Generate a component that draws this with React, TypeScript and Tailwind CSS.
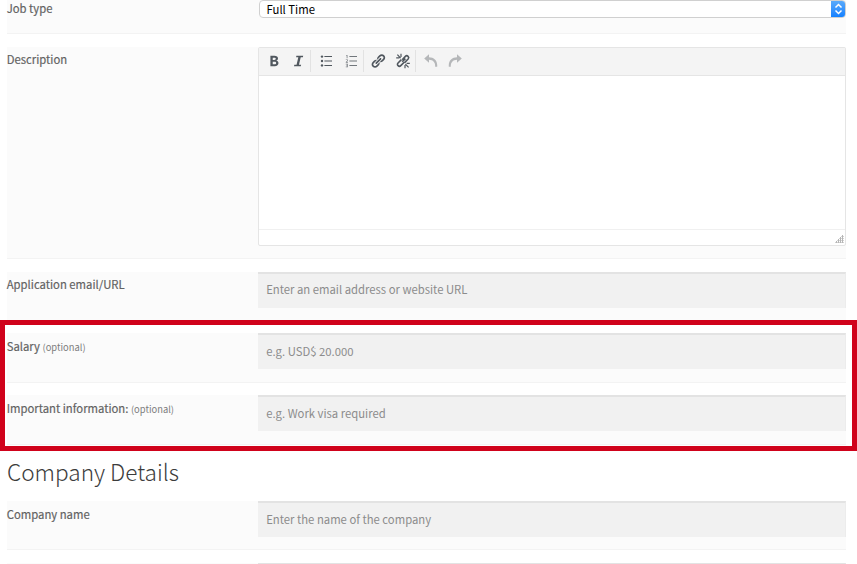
import type { ReactNode } from 'react';

type RowProps = { label: string; optional?: boolean; className: string; labelClass?: string; children: ReactNode };

function Row({ label, optional, className, labelClass = 'pt-[4px]', children }: RowProps) {
  return (
    <div className={`flex w-[839px] bg-[#fbfbfb] ${className}`}>
      <div className={`w-[251px] shrink-0 text-[11.3px] leading-[19px] text-[#5f5f5f] [-webkit-text-stroke:0.2px_#6d6d6d] ${labelClass}`}>
        <span className="-ml-[0.3px]">{label}</span>
        {optional && <small className="ml-[2.500px] text-[9.4px] text-[#7d7d7d] [-webkit-text-stroke:0]">(optional)</small>}
      </div>
      {children}
    </div>
  );
}

function Field({ placeholder, className = 'pb-[3px]' }: { placeholder: string; className?: string }) {
  return (
    <input
      placeholder={placeholder}
      className={`h-[36px] w-[588px] border-t-2 border-r border-t-[#e3e3e3] border-r-[#ececec] bg-[#f1f1f1] px-[8.2px] text-[11.3px] outline-none placeholder:text-[#8c8c8c] ${className}`}
    />
  );
}

function Icon({ children, className = 'text-[#50575e]' }: { children: ReactNode; className?: string }) {
  return (
    <svg viewBox="0 0 20 20" className={`size-4 shrink-0 ${className}`} fill="currentColor">
      {children}
    </svg>
  );
}

const Separator = () => <div className="h-[22px] w-px shrink-0 bg-[#e2e2e2]" />;

function Editor() {
  return (
    <div className="flex h-[199px] w-[588px] flex-col rounded-[2px] border border-[#e5e5e5] bg-white">
      <div className="flex h-[28px] shrink-0 items-center border-b border-[#e5e5e5] bg-[#f4f4f4] pb-px">
        <div className="flex w-[51px] items-center gap-[8px] pl-[7px]">
          <Icon>
            <path d="M5.500 3.500h4.900c2.900 0 4.600 1 4.600 3.300 0 1.300-.8 2.300-1.900 2.700v.1c1.500.3 2.500 1.300 2.500 3 0 2.500-1.800 3.900-4.700 3.900H5.500v-13zm2.900 5.100h2c1.300 0 1.800-.6 1.800-1.500S11.600 5.800 10.400 5.800h-2v2.800zm0 5.600h2.300c1.400 0 2-.6 2-1.600 0-1.200-.7-1.600-2-1.600H8.400v3.200z" />
          </Icon>
          <Icon>
            <path d="M8 3.500h8.500l-.4 1.700h-2.700l-2.200 9.600h2.700l-.4 1.700H5l.4-1.700h2.800l2.200-9.600H7.600z" />
          </Icon>
        </div>
        <Separator />
        <div className="flex w-[52px] items-center gap-[9px] pl-[7px]">
          <Icon>
            <circle cx="5" cy="4.500" r="1.500" />
            <circle cx="5" cy="10" r="1.500" />
            <circle cx="5" cy="15.500" r="1.500" />
            <path d="M8 3.900h9.500v1.200H8zM8 9.400h9.500v1.200H8zM8 14.900h9.500v1.200H8z" />
          </Icon>
          <Icon>
            <path d="M4 2.500h1.600v4.200h-1V3.500H4zM3.500 8h2.600v2l-1.400 1.300h1.400v.9H3.500v-1l1.700-1.500v-.8H3.500zM3.500 13.500h2.600v4.200H3.500v-.8h1.700v-.9H4v-.8h1.200v-.8H3.500z" opacity=".75" />
            <path d="M8 3.900h9.500v1.200H8zM8 9.400h9.500v1.200H8zM8 14.900h9.500v1.200H8z" opacity=".8" />
          </Icon>
        </div>
        <Separator />
        <div className="flex w-[51px] items-center gap-[9px] pl-[6px]">
          <Icon>
            <path d="M17.740 2.760c1.680 1.690 1.680 4.410 0 6.100l-1.530 1.520c-1.120 1.120-2.700 1.470-4.140 1.090l2.620-2.610.76-.77.76-.76c.84-.84.84-2.200 0-3.040-.84-.85-2.200-.85-3.040 0l-.77.76-3.380 3.380c-.37-1.440-.02-3.020 1.100-4.140l1.520-1.530c1.690-1.680 4.420-1.680 6.100 0zM8.590 13.430l5.340-5.340c.42-.42.42-1.100 0-1.520-.44-.43-1.130-.39-1.530 0l-5.330 5.340c-.42.42-.42 1.100 0 1.520.44.43 1.130.39 1.520 0zm-.76 2.290l4.140-4.150c.38 1.440.03 3.020-1.090 4.140l-1.520 1.530c-1.690 1.680-4.410 1.680-6.100 0-1.680-1.680-1.680-4.420 0-6.100l1.530-1.520c1.120-1.120 2.700-1.470 4.140-1.100l-4.140 4.150c-.85.84-.85 2.200 0 3.050.84.840 2.200.840 3.040 0z" />
          </Icon>
          <Icon>
            <g fill="none" stroke="currentColor" strokeWidth="2">
              <path d="M9 8.500l4-4.300c2.200-2.200 5.500 1 3.400 3.300L12 12M11.500 11.500l-4.300 4.300c-2.200 2.200-5.600-1-3.400-3.300L8 8.300M9 11l4-4" />
              <path d="M3 2l4 4.500M1.500 6h4M7.500 1v4M17 18l-4-4M18.500 13h-4M12.500 19v-4" strokeWidth="1.500" />
            </g>
          </Icon>
        </div>
        <Separator />
        <div className="flex items-center gap-[8px] pl-[7px]">
          <Icon className="text-[#b5b7b9]">
            <path d="M7.500 1.500v3.700c6 .2 10.300 3.700 10.300 10.300 0 .6 0 1.200-.1 1.700h-2.500c.5-5.300-2.700-8.600-7.700-8.700v3.800L1.500 7z" />
          </Icon>
          <Icon className="text-[#b5b7b9]">
            <path d="M12.500 1.500v3.700C6.500 5.400 2.200 8.900 2.200 15.500c0 .6 0 1.200.1 1.700h2.500c-.5-5.300 2.700-8.600 7.700-8.700v3.800l6-5.300z" />
          </Icon>
        </div>
      </div>
      <div className="grow" />
      <div className="flex h-[16px] shrink-0 items-end justify-end border-t border-[#f0f0f0] pr-[1px] pb-[2px]">
        <svg width="9" height="9" viewBox="0 0 9 9" fill="#b5b5b5">
          <path d="M7 1h1v8H7zM5 3h1v6H5zM3 5h1v4H3zM1 7h1v2H1z" />
          <path d="M0 8h9v1H0zM2 6h7v1H2zM4 4h5v1H4zM6 2h3v1H6z" opacity=".6" />
        </svg>
      </div>
    </div>
  );
}

export default function App() {
  return (
    <main className="h-[564px] w-[857px] overflow-hidden bg-white font-['Noto_Sans_CJK_SC',sans-serif]">
      <div className="pl-[7px]">
        <Row label="Job type" labelClass="pt-[3px]" className="-mt-[4px] h-[38px] border-b border-[#f3f3f3]">
          <div className="mt-[4px] ml-px flex h-[18px] w-[587px] overflow-hidden rounded-[4px] border border-[#d0d0d0] bg-white">
            <span className="grow pl-[6.500px] text-[11.3px] leading-[16px] text-black">Full Time</span>
            <span className="-my-px -mr-px flex w-[15px] items-center justify-center bg-linear-to-b from-[#5cacfb] to-[#087eff]">
              <svg width="9" height="12" viewBox="0 0 9 12" fill="none" stroke="white" strokeWidth="1.500">
                <path d="M1.500 4.500l3-3 3 3M1.500 7.500l3 3 3-3" />
              </svg>
            </span>
          </div>
        </Row>
        <Row label="Description" labelClass="pt-[3px]" className="mt-[13px] h-[212px] border-b border-[#f3f3f3]">
          <Editor />
        </Row>
        <Row label="Application email/URL" labelClass="pt-[3px]" className="mt-[13px] h-[48px]">
          <Field placeholder="Enter an email address or website URL" className="pb-[4px]" />
        </Row>
      </div>
      <section className="h-[131px] border-5 border-[#d0021b] pt-[8px] pl-[2px]">
        <Row label="Salary" optional className="h-[50px] border-b border-[#f3f3f3]">
          <Field placeholder="e.g. USD$ 20.000" />
        </Row>
        <Row label="Important information:" optional className="mt-[12px] h-[50px] border-b border-[#f3f3f3]">
          <Field placeholder="e.g. Work visa required" />
        </Row>
      </section>
      <div className="pl-[7px]">
        <h2 className="h-[50px] text-[22.6px] leading-[42px] font-light text-[#3c3c3c]">Company Details</h2>
        <Row label="Company name" className="h-[49px] border-b border-[#f3f3f3]">
          <Field placeholder="Enter the name of the company" />
        </Row>
        <Row label="" className="mt-[13px] h-[49px]">
          <Field placeholder="" />
        </Row>
      </div>
    </main>
  );
}
